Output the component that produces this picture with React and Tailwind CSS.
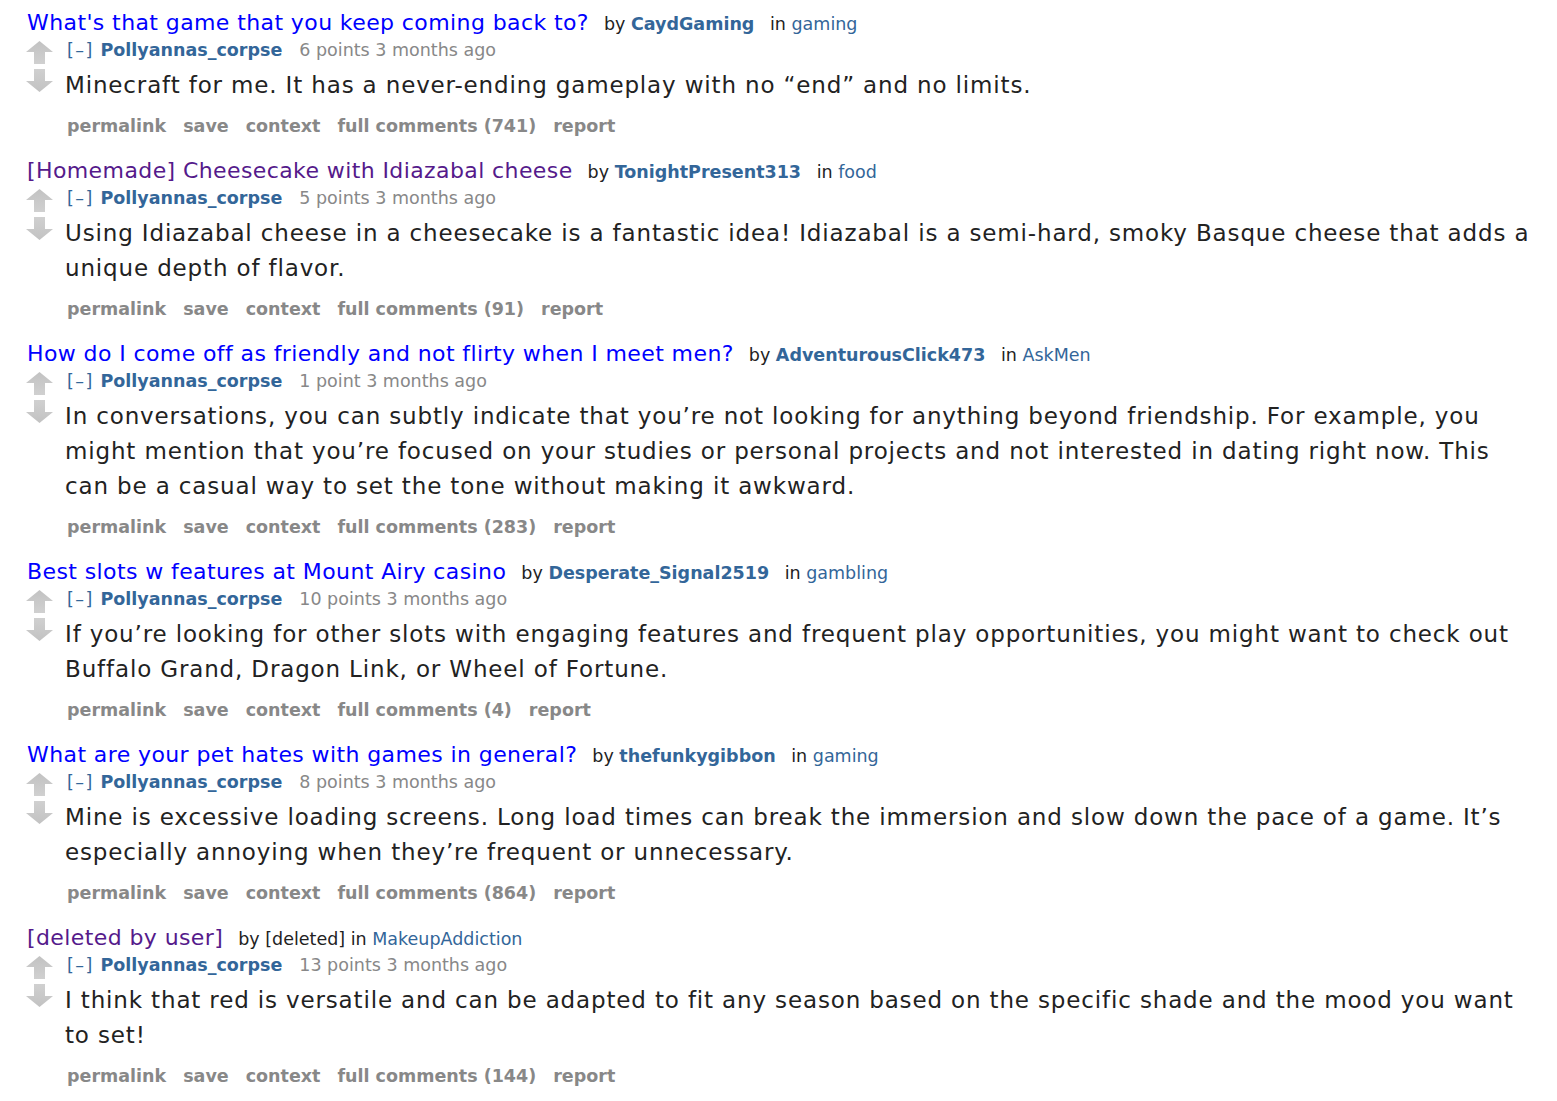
const entries = [
  {
    title: "What's that game that you keep coming back to?",
    visited: false,
    by: 'CaydGaming',
    sub: 'gaming',
    points: '6 points',
    body: 'Minecraft for me. It has a never-ending gameplay with no \u201cend\u201d and no limits.',
    comments: 741,
  },
  {
    title: '[Homemade] Cheesecake with Idiazabal cheese',
    visited: true,
    by: 'TonightPresent313',
    sub: 'food',
    points: '5 points',
    body: 'Using Idiazabal cheese in a cheesecake is a fantastic idea! Idiazabal is a semi-hard, smoky Basque cheese that adds a unique depth of flavor.',
    comments: 91,
  },
  {
    title: 'How do I come off as friendly and not flirty when I meet men?',
    visited: false,
    by: 'AdventurousClick473',
    sub: 'AskMen',
    points: '1 point',
    body: 'In conversations, you can subtly indicate that you\u2019re not looking for anything beyond friendship. For example, you might mention that you\u2019re focused on your studies or personal projects and not interested in dating right now. This can be a casual way to set the tone without making it awkward.',
    comments: 283,
  },
  {
    title: 'Best slots w features at Mount Airy casino',
    visited: false,
    by: 'Desperate_Signal2519',
    sub: 'gambling',
    points: '10 points',
    body: 'If you\u2019re looking for other slots with engaging features and frequent play opportunities, you might want to check out Buffalo Grand, Dragon Link, or Wheel of Fortune.',
    comments: 4,
  },
  {
    title: 'What are your pet hates with games in general?',
    visited: false,
    by: 'thefunkygibbon',
    sub: 'gaming',
    points: '8 points',
    body: 'Mine is excessive loading screens. Long load times can break the immersion and slow down the pace of a game. It\u2019s especially annoying when they\u2019re frequent or unnecessary.',
    comments: 864,
  },
  {
    title: '[deleted by user]',
    visited: true,
    by: null,
    sub: 'MakeupAddiction',
    points: '13 points',
    body: 'I think that red is versatile and can be adapted to fit any season based on the specific shade and the mood you want to set!',
    comments: 144,
  },
]

const Arrow = ({ down }) => (
  <svg width="27" height="23" viewBox="0 0 27 23" className={down ? 'rotate-180' : ''}>
    <defs>
      <linearGradient id={down ? 'gd' : 'gu'} x1="0" y1="0" x2="0" y2="1">
        <stop offset="0" stopColor="#c2c2c2" />
        <stop offset="1" stopColor="#d0d0d0" />
      </linearGradient>
    </defs>
    <path d="M13.5 0 L27 11 L19 11 L19 23 L8 23 L8 11 L0 11 Z" fill={`url(#${down ? 'gd' : 'gu'})`} />
  </svg>
)

const Entry = ({ e }) => (
  <div className="mb-[21px]">
    <div className="pl-[27px] leading-[28px] whitespace-nowrap">
      <a className={`text-[22px] tracking-[0.4px] ${e.visited ? 'text-[#551a8b]' : 'text-[#0000ff]'}`}>{e.title}</a>
      <span className="ml-[15px] text-[17.5px] text-[#222]">
        by{' '}
        {e.by ? (
          <a className="font-bold text-[#369] mr-[10px]">{e.by}</a>
        ) : (
          <span>[deleted]</span>
        )}{' '}
        in <a className="text-[#369]">{e.sub}</a>
      </span>
    </div>
    <div className="flex">
      <div className="w-[65px] shrink-0 pl-[26px] pt-[2px] flex flex-col gap-[5px]">
        <Arrow />
        <Arrow down />
      </div>
      <div className="w-[1475px]">
        <div className="pl-[2px] text-[17.5px] leading-[22px] text-[#888] whitespace-nowrap">
          <a className="text-[#369] tracking-[1.5px] mr-[1px]">[–]</a>{' '}
          <a className="font-bold text-[#369] mr-[17px]">Pollyannas_corpse</a>
          {e.points} 3 months ago
        </div>
        <p className="mt-[7px] text-[23px] tracking-[0.85px] leading-[35px] text-[#222]">{e.body}</p>
        <div className="mt-[13px] pl-[2px] flex gap-[17px] text-[17.5px] leading-[20px] font-bold text-[#888] whitespace-nowrap">
          <a>permalink</a>
          <a>save</a>
          <a>context</a>
          <a>full comments ({e.comments})</a>
          <a>report</a>
        </div>
      </div>
    </div>
  </div>
)

export default function App() {
  return (
    <div className="min-h-screen bg-white pt-[9px] font-['DejaVu_Sans',Verdana,sans-serif]">
      {entries.map((e, i) => (
        <Entry key={i} e={e} />
      ))}
    </div>
  )
}
